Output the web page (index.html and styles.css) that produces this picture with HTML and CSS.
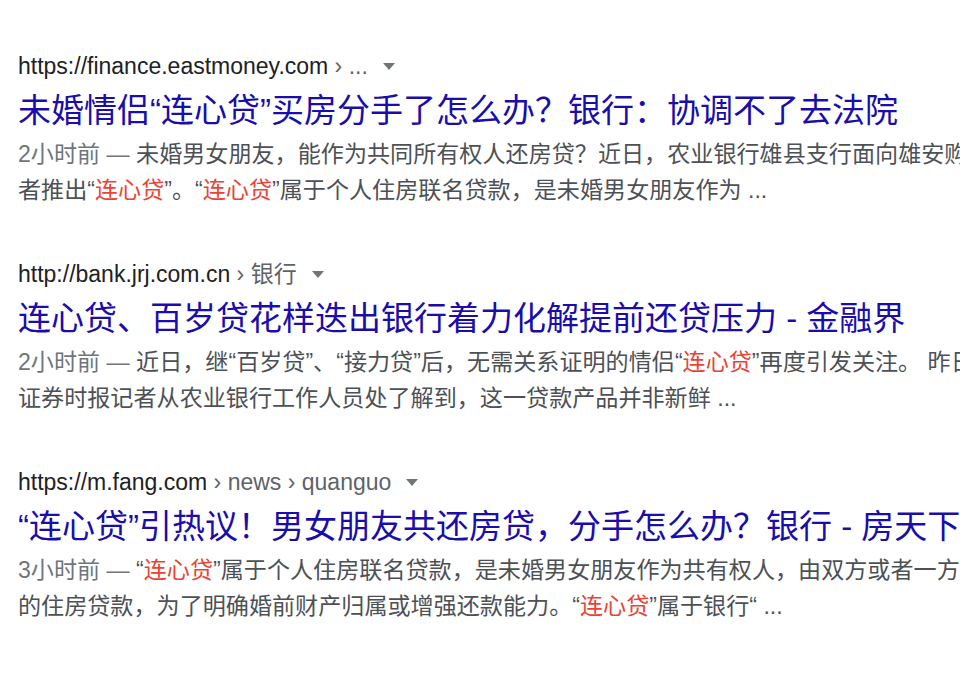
FILE: index.html
```html
<!DOCTYPE html>
<html lang="zh-CN">
<head>
    <meta charset="UTF-8">
    <meta name="viewport" content="width=device-width, initial-scale=1.0">
    <title>连心贷 - 搜索结果</title>
    <link rel="stylesheet" href="styles.css">
</head>
<body>
    <div id="resultados">

        <div class="resultado">
            <div class="url">
                https://finance.eastmoney.com<span class="trilha"> › ...</span>
                <span class="seta"></span>
            </div>
            <h3 class="titulo">未婚情侣“连心贷”买房分手了怎么办？银行：协调不了去法院</h3>
            <div class="trecho">
                <div class="linha"><span class="data">2小时前 — </span>未婚男女朋友，能作为共同所有权人还房贷？近日，农业银行雄县支行面向雄安购房</div>
                <div class="linha">者推出“<em>连心贷</em>”。“<em>连心贷</em>”属于个人住房联名贷款，是未婚男女朋友作为 ...</div>
            </div>
        </div>

        <div class="resultado">
            <div class="url">
                http://bank.jrj.com.cn<span class="trilha"> › 银行</span>
                <span class="seta"></span>
            </div>
            <h3 class="titulo">连心贷、百岁贷花样迭出银行着力化解提前还贷压力 - 金融界</h3>
            <div class="trecho">
                <div class="linha"><span class="data">2小时前 — </span>近日，继“百岁贷”、“接力贷”后，无需关系证明的情侣“<em>连心贷</em>”再度引发关注。 昨日，</div>
                <div class="linha">证券时报记者从农业银行工作人员处了解到，这一贷款产品并非新鲜 ...</div>
            </div>
        </div>

        <div class="resultado">
            <div class="url">
                https://m.fang.com<span class="trilha"> › news › quanguo</span>
                <span class="seta"></span>
            </div>
            <h3 class="titulo">“连心贷”引热议！男女朋友共还房贷，分手怎么办？银行 - 房天下</h3>
            <div class="trecho">
                <div class="linha"><span class="data">3小时前 — </span>“<em>连心贷</em>”属于个人住房联名贷款，是未婚男女朋友作为共有权人，由双方或者一方</div>
                <div class="linha">的住房贷款，为了明确婚前财产归属或增强还款能力。“<em>连心贷</em>”属于银行“ ...</div>
            </div>
        </div>

    </div>
</body>
</html>
```

FILE: styles.css
```css
:root {
    --cor-url: #202124;
    --cor-trilha: #5f6368;
    --cor-seta: #70757a;
    --cor-titulo: #1a0dab;
    --cor-texto: #4d5156;
    --cor-data: #70757a;
    --cor-destaque: #ea4335;
}

html, body {
    overflow: hidden;
}

body {
    font-family: Arial, 'Liberation Sans', 'Noto Sans CJK SC', sans-serif;
    background-color: #fff;
    margin: 0;
    padding: 51px 0 0 18px;
}

.resultado {
    margin-bottom: 51px;
    white-space: nowrap;
}

.url {
    font-size: 23px;
    line-height: 30px;
    height: 30px;
    color: var(--cor-url);
    display: flex;
    align-items: center;
}

.trilha {
    color: var(--cor-trilha);
    white-space: pre;
}

.seta {
    display: inline-block;
    width: 0;
    height: 0;
    margin-left: 15px;
    border-left: 6px solid transparent;
    border-right: 6px solid transparent;
    border-top: 7px solid var(--cor-seta);
}

.titulo {
    font-size: 33px;
    font-weight: normal;
    line-height: 44px;
    color: var(--cor-titulo);
    margin: 8px 0 3px;
}

.trecho {
    font-size: 23.1px;
    line-height: 36px;
    color: var(--cor-texto);
}

.data {
    color: var(--cor-data);
}

em {
    font-style: normal;
    color: var(--cor-destaque);
}
```
